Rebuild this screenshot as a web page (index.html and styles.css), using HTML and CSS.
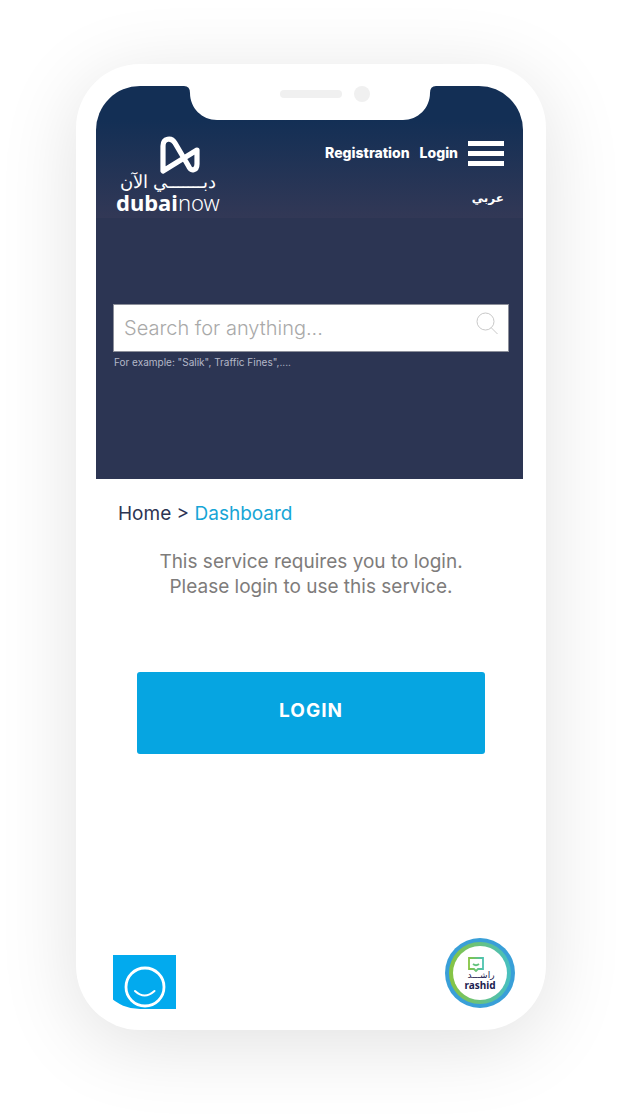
FILE: index.html
```html
<!DOCTYPE html>
<html lang="en">
  <head>
    <meta charset="UTF-8" />
    <meta name="viewport" content="width=device-width, initial-scale=1" />
    <title>DubaiNow - Dashboard</title>
    <link rel="stylesheet" href="styles.css">
  </head>
  <body>
    <div class="phone">
      <svg class="notch" width="256" height="34" viewBox="0 0 256 34" aria-hidden="true">
        <path d="M0 0H2Q8 0 8 7C8 22 20 34 35 34H221C236 34 248 22 248 7Q248 0 254 0H256V-2H0Z" fill="#fff" />
        <rect x="98" y="4" width="62" height="8" rx="4" fill="#f0f0f0" />
        <circle cx="180" cy="8" r="8" fill="#f0f0f0" />
      </svg>

      <div class="screen">
        <header class="topbar">
          <a href="#" class="logo" aria-label="Dubai Now">
            <svg class="logo-mark" width="40" height="38" viewBox="0 0 40 38" aria-hidden="true">
              <path d="M3 35V10C3 2 11.500 1 15 7L28.500 30C31 36 37 34.500 37 28V14Z" fill="none" stroke="#fff" stroke-width="5.200" stroke-linejoin="round" />
            </svg>
            <span class="logo-arabic" lang="ar" dir="rtl">دبـــــــي الآن</span>
            <span class="logo-name"><b>dubai</b>now</span>
          </a>

          <nav class="menu">
            <div class="menu-row">
              <a href="#">Registration</a>
              <a href="#">Login</a>
              <button type="button" class="burger" aria-label="Menu">
                <span></span>
                <span></span>
                <span></span>
              </button>
            </div>
            <a href="#" class="language" lang="ar" dir="rtl">عربي</a>
          </nav>
        </header>

        <form class="search">
          <div class="search-box">
            <input type="text" id="search" placeholder="Search for anything..." aria-label="Search" />
            <button type="submit" aria-label="Search">
              <svg width="22" height="23" viewBox="0 0 22 23" aria-hidden="true">
                <circle cx="9.500" cy="9.500" r="8.500" fill="none" stroke="#c8c8c8" />
                <path d="M15 15.500L21.500 22" fill="none" stroke="#c8c8c8" />
              </svg>
            </button>
          </div>
          <label for="search">For example: "Salik", Traffic Fines",....</label>
        </form>

        <main class="content">
          <nav class="breadcrumb">
            <a href="#">Home</a> &gt; <a href="#" class="current">Dashboard</a>
          </nav>
          <p class="message">
            This service requires you to login.<br />
            Please login to use this service.
          </p>
          <button type="button" class="login">LOGIN</button>
        </main>

        <footer class="widgets">
          <button type="button" class="happiness" aria-label="Feedback">
            <svg width="63" height="54" viewBox="0 0 63 54" aria-hidden="true">
              <circle cx="32" cy="32" r="19" fill="none" stroke="#fff" stroke-width="2.800" />
              <path d="M22 36Q31.500 45 41.500 36" fill="none" stroke="#fff" stroke-width="2" stroke-linecap="round" />
            </svg>
          </button>

          <button type="button" class="rashid">
            <span class="rashid-face">
              <svg width="16" height="15" viewBox="0 0 16 15" aria-hidden="true">
                <defs>
                  <linearGradient id="bubble">
                    <stop offset="0" stop-color="#85c441" />
                    <stop offset="1" stop-color="#4cc2b0" />
                  </linearGradient>
                </defs>
                <path d="M1 1H15V12H10L8 14L6 12H1Z" fill="none" stroke="url(#bubble)" stroke-width="1.800" />
                <path d="M5 7Q8 9.500 11 7" fill="none" stroke="#62c27c" stroke-width="1.800" />
              </svg>
              <span class="rashid-arabic" lang="ar" dir="rtl">راشـــد</span>
              <b>rashid</b>
            </span>
          </button>
        </footer>
      </div>
    </div>
  </body>
</html>
```

FILE: styles.css
```css
* {
  box-sizing: border-box;
}
body {
  margin: 0;
  padding: 64px 76px 88px;
  background-color: #fff;
  font-family: Inter, "Noto Sans", "DejaVu Sans", sans-serif;
  color: #2c3553;
}
a {
  color: inherit;
  text-decoration: none;
}
button {
  padding: 0;
  border: none;
  background: none;
  font-family: inherit;
  cursor: pointer;
}
svg {
  display: block;
}
.phone {
  position: relative;
  padding: 22px 23px 21px 20px;
  border-radius: 64px;
  background-color: #fff;
  box-shadow: 0 14px 80px rgba(0, 0, 0, 0.12);
}
/* lies over the top edge of the screen */
.notch {
  position: absolute;
  top: 22px;
  left: 50%;
  transform: translateX(-50%);
  margin-left: -1px;
}
.screen {
  overflow: hidden;
  border-radius: 44px;
}
.topbar {
  display: flex;
  justify-content: space-between;
  padding: 50px 19px 4px 20px;
  min-height: 132px;
  background: linear-gradient(#132f55 26%, #323856);
  color: #fff;
}
.logo {
  display: flex;
  flex-direction: column;
  align-items: center;
}
.logo-mark {
  margin-left: 25px;
}
.logo-arabic {
  font-family: "DejaVu Sans", sans-serif;
  font-weight: 200;
  font-size: 18px;
  line-height: 16px;
  white-space: nowrap;
}
.logo-name {
  font-family: "Noto Sans", sans-serif;
  font-weight: 300;
  font-size: 22px;
  line-height: 24px;
}
.logo-name b {
  font-weight: 700;
}
.menu {
  display: flex;
  flex-direction: column;
  align-items: flex-end;
  gap: 22px;
  padding-top: 3px;
}
.menu-row {
  display: flex;
  align-items: center;
  gap: 10px;
  font-size: 14px;
  font-weight: 800;
  line-height: 28px;
}
.burger {
  display: flex;
  flex-direction: column;
  gap: 5px;
}
.burger span {
  width: 36px;
  height: 5px;
  background-color: #fff;
}
.language {
  font-family: "DejaVu Sans", sans-serif;
  font-size: 12px;
  font-weight: 700;
  line-height: 18px;
}
.search {
  padding: 86px 14px 108px 17px;
  background-color: #2c3553;
}
.search-box {
  display: flex;
  align-items: flex-start;
  height: 48px;
  border: 1px solid #8c8f9a;
  background-color: #fff;
}
.search-box input {
  flex: 1;
  min-width: 0;
  height: 100%;
  padding: 0 10px;
  border: none;
  background: none;
  font-family: inherit;
  font-size: 20px;
  font-weight: 300;
}
.search-box input::placeholder {
  color: #a9a9a9;
}
.search-box button {
  padding: 7px 10px;
}
.search label {
  display: block;
  padding: 2px 1px 1px;
  font-size: 10px;
  line-height: 16px;
  color: #b4b8c8;
}
.content {
  padding: 23px 38px 0 41px;
}
.breadcrumb {
  margin-left: -19px;
  font-size: 19px;
  line-height: 24px;
}
.breadcrumb .current {
  color: #17a5d6;
}
.message {
  margin: 23px 0 73px;
  font-size: 19px;
  line-height: 25px;
  text-align: center;
  color: #7e7c7b;
}
.login {
  width: 100%;
  padding: 26px 0 30px;
  border-radius: 3px;
  background-color: #06a5e1;
  color: #fff;
  font-size: 19px;
  font-weight: 700;
  line-height: 26px;
  letter-spacing: 1px;
}
.widgets {
  display: flex;
  justify-content: space-between;
  align-items: flex-end;
  padding: 184px 8px 0 17px;
}
.happiness {
  background-color: #02aaee;
}
.rashid {
  width: 70px;
  height: 70px;
  margin-bottom: 1px;
  padding: 4px;
  border-radius: 50%;
  background-color: #399fd8;
}
.rashid-face {
  display: flex;
  flex-direction: column;
  align-items: center;
  height: 62px;
  padding-top: 11px;
  border: 4px solid transparent;
  border-radius: 50%;
  background: linear-gradient(#fff, #fff) padding-box,
    linear-gradient(90deg, #88c440, #46bfc3) border-box;
  color: #1b2150;
}
.rashid-face svg {
  margin-right: 8px;
}
.rashid-arabic {
  margin-right: -2px;
  font-family: "DejaVu Sans", sans-serif;
  font-size: 9px;
  line-height: 6px;
}
.rashid-face b {
  font-family: "Noto Sans", sans-serif;
  font-size: 10px;
  line-height: 14px;
}
```
